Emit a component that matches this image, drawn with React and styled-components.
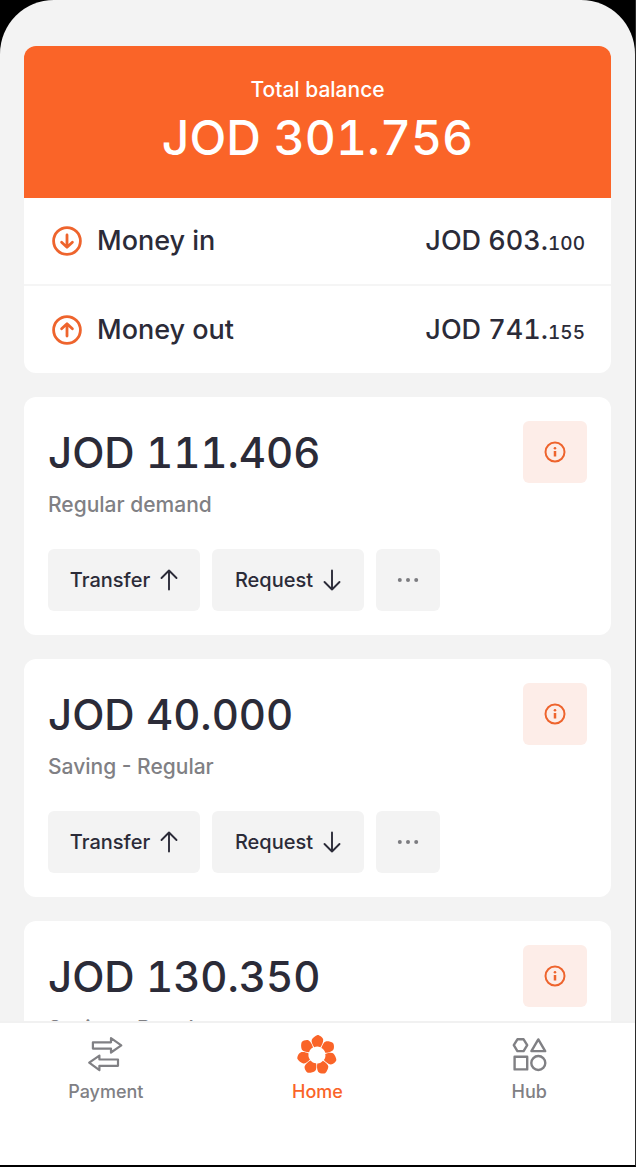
import React from 'react';
import styled, { createGlobalStyle } from 'styled-components';

const accounts = [
  { id: 1, amount: 'JOD 111.406', type: 'Regular demand' },
  { id: 2, amount: 'JOD 40.000', type: 'Saving - Regular' },
  { id: 3, amount: 'JOD 130.350', type: 'Saving - Regular' },
];

const petals = [0, 1, 2, 3, 4, 5, 6];

export default function App() {
  return (
    <>
      <GlobalStyle />
      <Screen>
        <Content>
          <Card as='section'>
            <Balance>
              <BalanceLabel>Total balance</BalanceLabel>
              <BalanceAmount>JOD 301.756</BalanceAmount>
            </Balance>
            <MoneyRow label='Money in' whole='JOD 603.' part='100' />
            <MoneyRow label='Money out' whole='JOD 741.' part='155' up />
          </Card>
          {accounts.map((account) => (
            <AccountCard key={account.id} account={account} />
          ))}
        </Content>
        <Nav>
          <NavLink href='#payment'>
            <PaymentIcon />
            Payment
          </NavLink>
          <NavLink href='#home' $active>
            <HomeIcon />
            Home
          </NavLink>
          <NavLink href='#hub'>
            <HubIcon />
            Hub
          </NavLink>
        </Nav>
      </Screen>
    </>
  )
}

function MoneyRow(props) {
  return (
    <Row>
      <CircleArrow up={props.up} />
      <RowLabel>{props.label}</RowLabel>
      <RowAmount>{props.whole}<small>{props.part}</small></RowAmount>
    </Row>
  )
}

function AccountCard(props) {
  return (
    <Card>
      <CardBody>
        <CardHead>
          <Amount>{props.account.amount}</Amount>
          <InfoButton aria-label='Account info'>
            <InfoIcon />
          </InfoButton>
        </CardHead>
        <AccountType>{props.account.type}</AccountType>
        <Actions>
          <ActionButton>Transfer <Arrow up /></ActionButton>
          <ActionButton>Request <Arrow /></ActionButton>
          <MoreButton aria-label='More'>
            <DotsIcon />
          </MoreButton>
        </Actions>
      </CardBody>
    </Card>
  )
}

function CircleArrow(props) {
  return (
    <svg width='30' height='30' viewBox='0 0 30 30' fill='none' stroke='#ee642d' strokeWidth='2.8' strokeLinecap='round' strokeLinejoin='round'>
      <circle cx='15' cy='15' r='13.4' />
      <path d={props.up ? 'M15 21V9.4M9.6 13.8L15 8.8L20.4 13.8' : 'M15 9V20.6M9.6 16.2L15 21.2L20.4 16.2'} />
    </svg>
  )
}

function Arrow(props) {
  return (
    <svg width='18' height='22' viewBox='0 0 18 22' fill='none' stroke='#2b2b38' strokeWidth='1.9' strokeLinecap='round' strokeLinejoin='round'>
      <path d={props.up ? 'M9 20.5V1.5M1.5 9L9 1.5L16.5 9' : 'M9 1.5V20.5M1.5 13L9 20.5L16.5 13'} />
    </svg>
  )
}

function InfoIcon() {
  return (
    <svg width='22' height='22' viewBox='0 0 22 22' fill='none'>
      <circle cx='11' cy='11' r='9.5' stroke='#ee642d' strokeWidth='2' />
      <circle cx='11' cy='7.2' r='1.3' fill='#ee642d' />
      <path d='M11 10V15.6' stroke='#ee642d' strokeWidth='2.5' />
    </svg>
  )
}

function DotsIcon() {
  return (
    <svg width='22' height='6' viewBox='0 0 22 6' fill='#7c7c80'>
      <circle cx='2.8' cy='3' r='2' />
      <circle cx='11' cy='3' r='2' />
      <circle cx='19.2' cy='3' r='2' />
    </svg>
  )
}

function PaymentIcon() {
  return (
    <svg width='38' height='38' viewBox='0 0 38 38' fill='none' stroke='#808084' strokeWidth='2.2' strokeLinejoin='round'>
      <path d='M5.9 6.3H24V2.2L34.3 9.3L24 16.5V12.6H5.9Z' />
      <path d='M31 23.5H12.4V19.6L2.2 26.7L12.4 34.2V29.8H31Z' />
    </svg>
  )
}

function HomeIcon() {
  return (
    <svg width='42' height='38' viewBox='-21 -19 42 38' overflow='visible' fill='#fa6428'>
      {petals.map((i) => (
        <path key={i} transform={`rotate(${i * 360 / 7})`} d='M-2.8 -7.8C-4.5 -10.3 -6 -13.4 -5.2 -15.3C-4.4 -17 -1.5 -19.5 0.6 -20C2.5 -20 6 -17.5 6.2 -15.5C6.4 -13 5 -10 3.4 -7.8C1.5 -8.8 -1 -8.8 -2.8 -7.8Z' />
      ))}
    </svg>
  )
}

function HubIcon() {
  return (
    <svg width='38' height='38' viewBox='0 0 38 38' fill='none' stroke='#808084' strokeWidth='2.4' strokeLinejoin='round'>
      <path d='M7.4 3.3H13.6L17.2 9.2L13.6 15.1H7.4L3.8 9.2Z' />
      <path d='M28.3 3.4L35.2 15.1H21.4Z' />
      <rect x='4.6' y='20.8' width='12.6' height='12.6' />
      <circle cx='28.3' cy='27' r='7' />
    </svg>
  )
}

const GlobalStyle = createGlobalStyle`
  * {
    box-sizing: border-box;
  }
  body {
    margin: 0;
    background-color: #000000;
    color: #2b2b38;
    font-family: Inter, 'Liberation Sans', sans-serif;
    font-weight: 500;
  }
  button {
    font: inherit;
    color: inherit;
    border: none;
    cursor: pointer;
  }
`

const Screen = styled.div`
  display: flex;
  flex-direction: column;
  height: 100vh;
  border-right: 1px solid #2b2b2b;
  border-bottom: 2px solid #000000;
`

const Content = styled.main`
  display: flex;
  flex-direction: column;
  flex: 1;
  row-gap: 24px;
  min-height: 0;
  padding: 46px 24px 0;
  overflow: hidden;
  background-color: #f3f3f3;
  border-radius: 54px 54px 0 0;
`

const Card = styled.article`
  flex-shrink: 0;
  overflow: hidden;
  background-color: #ffffff;
  border-radius: 12px;
`

const Balance = styled.div`
  display: flex;
  flex-direction: column;
  align-items: center;
  row-gap: 8px;
  padding: 32px 24px;
  background-color: #fa6428;
  color: #ffffff;
`

const BalanceLabel = styled.div`
  font-size: 21px;
  line-height: 24px;
`

const BalanceAmount = styled.div`
  font-size: 48px;
  line-height: 56px;
  font-variant-numeric: tabular-nums;
`

const Row = styled.div`
  display: flex;
  align-items: center;
  column-gap: 15px;
  height: 86px;
  padding: 0 26px 0 28px;
  & + & {
    height: 89px;
    border-top: 2px solid #f5f5f5;
  }
`

const RowLabel = styled.span`
  flex: 1;
  font-size: 27px;
  line-height: 32px;
`

const RowAmount = styled.span`
  font-size: 27px;
  line-height: 32px;
  font-variant-numeric: tabular-nums;
  small {
    font-size: 19px;
    line-height: 1;
  }
`

const CardBody = styled.div`
  padding: 24px;
`

const CardHead = styled.div`
  display: flex;
  justify-content: space-between;
  align-items: flex-start;
`

const Amount = styled.div`
  font-size: 42px;
  line-height: 64px;
  font-variant-numeric: tabular-nums;
`

const AccountType = styled.div`
  margin-top: 8px;
  font-size: 21px;
  line-height: 24px;
  color: #808084;
`

const Actions = styled.div`
  display: flex;
  column-gap: 12px;
  margin-top: 32px;
`

const ActionButton = styled.button`
  display: flex;
  align-items: center;
  justify-content: center;
  column-gap: 10px;
  width: 152px;
  height: 62px;
  padding: 0;
  font-size: 20px;
  background-color: #f3f3f3;
  border-radius: 6px;
`

const MoreButton = styled(ActionButton)`
  width: 64px;
`

const InfoButton = styled(ActionButton)`
  width: 64px;
  background-color: #fdede8;
`

const Nav = styled.nav`
  display: grid;
  grid-template-columns: repeat(3, 1fr);
  height: 144px;
  padding-top: 13px;
  background-color: #ffffff;
  border-top: 2px solid #f1f1f1;
`

const NavLink = styled.a`
  display: flex;
  flex-direction: column;
  align-items: center;
  row-gap: 6px;
  font-size: 18px;
  line-height: 24px;
  text-decoration: none;
  color: ${(props) => (props.$active ? "#fa6428" : "#808084")};
`
